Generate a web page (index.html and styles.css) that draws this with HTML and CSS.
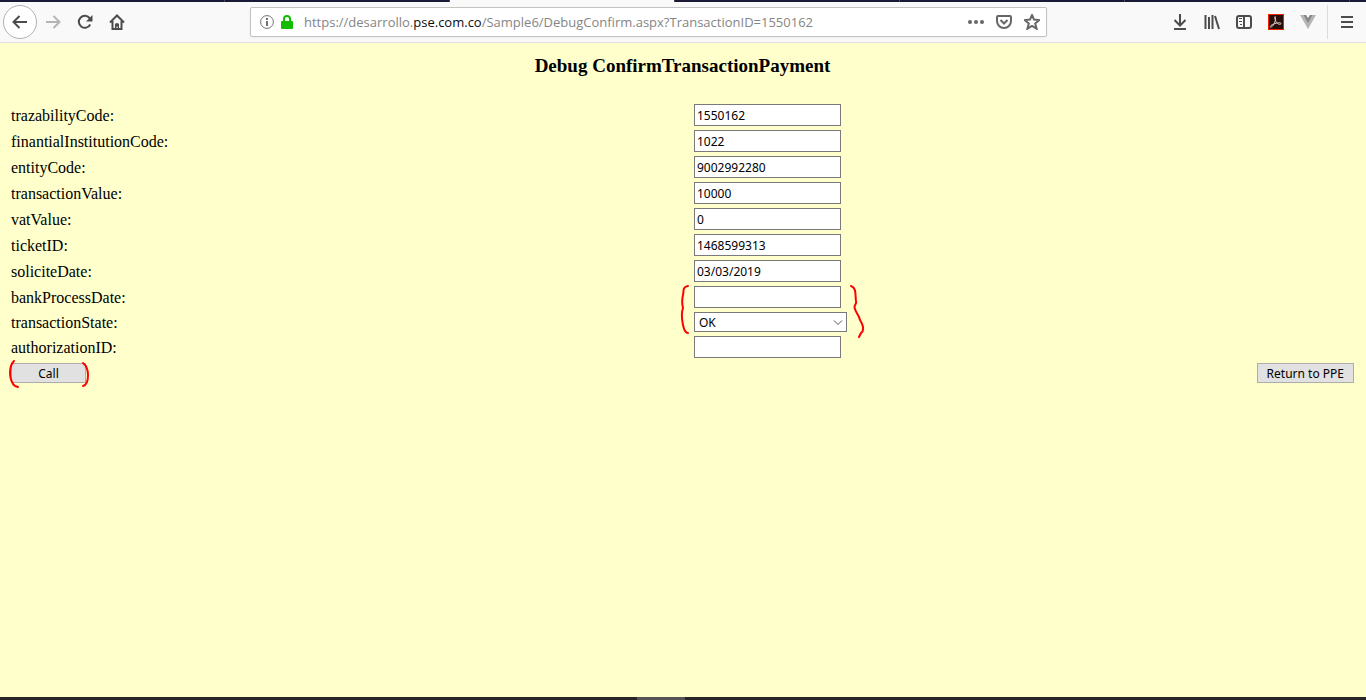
FILE: index.html
```html
<!DOCTYPE html>
<html lang="en">
<head>
<meta charset="utf-8">
<title>Debug ConfirmTransactionPayment</title>
<link rel="stylesheet" href="styles.css">
</head>
<body>
<div class="tabs"><span class="tab"></span><span class="tab"></span><span class="tab active"></span><span class="tab"></span><span class="tab"></span><span class="tab"></span></div>
<header class="toolbar">
  <nav class="nav">
    <button class="icon back" aria-label="Back"><svg width="16" height="16" viewBox="0 0 16 16"><path d="M15 8H2M7.500 2 1.500 8l6 6"/></svg></button>
    <button class="icon faded" aria-label="Forward"><svg width="16" height="16" viewBox="0 0 16 16"><path d="M1 8h13M8.500 2l6 6-6 6"/></svg></button>
    <button class="icon" aria-label="Reload"><svg width="16" height="16" viewBox="0 0 16 16"><path d="M13.200 10.500A6 6 0 1 1 12.500 4L14 5.500"/><path class="solid" d="M15.500 1v6.500H9z"/></svg></button>
    <button class="icon" aria-label="Home"><svg width="16" height="16" viewBox="0 0 16 16"><path d="M1 8.500 8 1.500l7 7M3.500 7v8h9V7"/><path class="solid" d="M6 15v-4.500q0-1.500 2-1.500t2 1.500V15H8.700v-2.500H7.500V15z"/></svg></button>
  </nav>
  <div class="address">
    <svg width="16" height="16" viewBox="0 0 16 16" class="info"><circle cx="8" cy="8" r="6.400"/><path d="M8 7v5M8 4v2"/></svg>
    <svg width="14" height="16" viewBox="0 0 14 16" class="lock"><path class="body" d="M2 7h10q1 0 1 1v6q0 1-1 1H2q-1 0-1-1V8q0-1 1-1z"/><path class="shackle" d="M4 8V5a3 3 0 0 1 6 0v3"/></svg>
    <a class="url" href="#">https://desarrollo.<span class="host">pse.com.co</span>/Sample6/DebugConfirm.aspx?TransactionID=1550162</a>
    <button class="icon small" aria-label="Page actions"><svg width="16" height="16" viewBox="0 0 16 16"><g class="solid"><circle cx="2" cy="8" r="2"/><circle cx="8" cy="8" r="2"/><circle cx="14" cy="8" r="2"/></g></svg></button>
    <button class="icon small" aria-label="Pocket"><svg width="16" height="16" viewBox="0 0 16 16"><path d="M2 2h12q1 0 1 1v4a7 7 0 0 1-14 0V3q0-1 1-1zM4.500 6 8 9.500 11.500 6"/></svg></button>
    <button class="icon small" aria-label="Bookmark"><svg width="16" height="16" viewBox="0 0 16 16"><path d="M8 1l2 4.600 5.200.5-4 3.400 1.400 5.200L8 12l-4.600 2.700 1.400-5.200-4-3.400 5.200-.5z"/></svg></button>
  </div>
  <div class="tools">
    <button class="icon" aria-label="Downloads"><svg width="16" height="16" viewBox="0 0 16 16"><path d="M8 0v11M2.500 6 8 11.500 13.500 6M2 15h12"/></svg></button>
    <button class="icon" aria-label="Library"><svg width="16" height="16" viewBox="0 0 16 16"><path d="M1.500 1v14M5 3v12M8.500 1v14M11 2l4 13"/></svg></button>
    <button class="icon" aria-label="Sidebars"><svg width="16" height="16" viewBox="0 0 16 16"><rect x="1" y="2" width="14" height="12" rx="2"/><path d="M8 2v12"/><path class="thin" d="M3 4.500h3M3 7.500h3M4 10.500h2"/></svg></button>
    <button class="icon" aria-label="Adobe Acrobat"><svg width="16" height="16" viewBox="0 0 16 16"><rect class="pdf" x=".5" y=".5" width="15" height="15"/><path class="mark" d="M3 13C5 13 8 7 7.500 3.500 7 1 6 4 8 7.500 10 11 13 11 13 9.500 13 8 6 9 3 11.500 1.500 13 2.500 13.500 3 13"/></svg></button>
    <button class="icon" aria-label="Vue devtools"><svg width="16" height="16" viewBox="0 0 16 16"><path class="vouter" d="M0 1h6l2 3 2-3h6L8 15z"/><path class="vinner" d="M3.500 1H6l2 3.500L10 1h2.500L8 9z"/></svg></button>
    <button class="icon menu" aria-label="Menu"><svg width="16" height="16" viewBox="0 0 16 16"><path d="M2 3h12M2 8h12M2 13h12"/></svg></button>
  </div>
</header>
<main class="page">
  <h1 class="title">Debug ConfirmTransactionPayment</h1>
  <form class="form">
    <div class="row"><label for="f1">trazabilityCode:</label><input class="field" id="f1" type="text" value="1550162"></div>
    <div class="row"><label for="f2">finantialInstitutionCode:</label><input class="field" id="f2" type="text" value="1022"></div>
    <div class="row"><label for="f3">entityCode:</label><input class="field" id="f3" type="text" value="9002992280"></div>
    <div class="row"><label for="f4">transactionValue:</label><input class="field" id="f4" type="text" value="10000"></div>
    <div class="row"><label for="f5">vatValue:</label><input class="field" id="f5" type="text" value="0"></div>
    <div class="row"><label for="f6">ticketID:</label><input class="field" id="f6" type="text" value="1468599313"></div>
    <div class="row"><label for="f7">soliciteDate:</label><input class="field" id="f7" type="text" value="03/03/2019"></div>
    <div class="row"><label for="f8">bankProcessDate:</label>
      <div class="marked"><input class="field" id="f8" type="text">
        <svg class="brace" width="190" height="60" viewBox="0 0 190 60"><path d="M12 3C6 4 8 8 7 12 6 16 6 21 7 25 5 30 6 37 7 42 8 47 10 50 12 50M175 3C181 5 179 13 180 18 181 22 177 22 179 26 180 30 183 32 184 37 187 42 189 47 185 50L183 54"/></svg>
      </div></div>
    <div class="row"><label for="f9">transactionState:</label><div class="picker"><select class="select" id="f9"><option>OK</option></select><svg class="chevron" width="10" height="6" viewBox="0 0 10 6"><path d="M1 .500 5 4.500 9 .500"/></svg></div></div>
    <div class="row"><label for="f10">authorizationID:</label><input class="field" id="f10" type="text"></div>
    <div class="actions">
      <div class="marked"><button class="btn call" type="button">Call</button>
        <svg class="parens" width="84" height="30" viewBox="0 0 84 30"><path d="M7 2C4 5 3 10 3 14 3 19 5 25 8 27L11 28M76 4C80 7 81 11 81 16 81 21 80 26 76 27"/></svg>
      </div>
      <button class="btn" type="button">Return to PPE</button>
    </div>
  </form>
</main>
<footer class="taskbar"><span class="running"></span></footer>
</body>
</html>
```
FILE: styles.css
```css
* { box-sizing: border-box; }
body {
  margin: 0;
  min-height: 100vh;
  display: flex;
  flex-direction: column;
  background: #ffffcc;
  color: #000;
  font-family: "Liberation Serif", serif;
}
svg { display: block; fill: none; flex: none; }

.tabs { display: flex; height: 2px; background: #1b1a36; }
.tab { flex: 0 0 225px; border-right: 1px solid #45445c; }
.tab.active { background: #f9f9fa; }

.toolbar {
  display: flex;
  align-items: center;
  height: 41px;
  padding: 0 0 0 3px;
  background: #f9f9fa;
  border-bottom: 1px solid #dededf;
}
.nav { display: flex; align-items: center; width: 247px; }
.icon {
  display: flex;
  align-items: center;
  justify-content: center;
  width: 32px;
  height: 32px;
  padding: 0;
  border: 0;
  background: none;
}
.icon svg { stroke: #4c4c4d; stroke-width: 2; }
.icon .solid { fill: #4c4c4d; stroke: none; }
.icon .thin { stroke-width: 1; }
.icon.small { width: 28px; height: 28px; }
.icon.small svg { stroke: #666; }
.icon.small .solid { fill: #666; }
.back {
  width: 34px;
  height: 34px;
  border: 1px solid #b1b1b1;
  border-radius: 50%;
  background: #fff;
}
.faded svg { stroke: #b5b5b6; }

.address {
  display: flex;
  align-items: center;
  flex: 0 1 797px;
  height: 30px;
  padding: 0 0 0 8px;
  background: #fff;
  border: 1px solid #c2c2c3;
  border-radius: 2px;
  box-shadow: 0 1px 3px #0000000d;
}
.info { stroke: #737373; stroke-width: 1; margin-right: 5px; }
.info path { stroke-width: 2; }
.lock .body { fill: #12bc00; }
.lock .shackle { stroke: #12bc00; stroke-width: 2; }
.url {
  flex: 1;
  margin-left: 10px;
  color: #858585;
  font: 13px "Open Sans", sans-serif;
  text-decoration: none;
  white-space: nowrap;
}
.host { color: #0c0c0d; }

.tools { display: flex; align-items: center; margin-left: auto; }
.menu { width: 39px; height: 34px; margin-left: 3px; border-left: 1px solid #dcdcdd; }
.icon .pdf { fill: #2a0e0c; stroke: #f02000; stroke-width: 1; }
.icon .mark { stroke: #d7cdca; stroke-width: 1; }
.icon .vouter { fill: #b5b5b5; stroke: none; }
.icon .vinner { fill: #858585; stroke: none; }

.page { flex: 1; padding: 12px 12px 0 11px; }
.title {
  margin: 0 0 27px;
  font-size: 19px;
  line-height: 22px;
  text-align: center;
}
.form { display: flex; flex-direction: column; gap: 4px; font-size: 16px; }
.row {
  display: grid;
  grid-template-columns: 1fr 1fr;
  column-gap: 23px;
  align-items: center;
  justify-items: start;
}
.row label { padding-top: 2px; line-height: 18px; }
.field, .select, .btn { font: 12px "Noto Sans", sans-serif; color: #000; }
.field {
  display: block;
  width: 147px;
  height: 22px;
  padding: 0 2px;
  border: 1px solid #7a7a7a;
  background: #fff;
}
.select {
  display: block;
  width: 153px;
  height: 20px;
  padding: 0 4px;
  border: 1px solid #7a7a7a;
  border-radius: 0;
  background: #fff;
  appearance: none;
}
.marked, .picker { position: relative; }
.chevron { position: absolute; right: 4px; top: 8px; stroke: #555; pointer-events: none; }
.brace, .parens { position: absolute; stroke: #f00; stroke-width: 2; stroke-linecap: round; pointer-events: none; }
.brace { left: -18px; top: -3px; z-index: 1; }
.parens { left: -4px; top: -4px; }
.actions { display: flex; justify-content: space-between; padding-top: 1px; }
.btn {
  display: block;
  height: 20px;
  padding: 0 9px;
  border: 1px solid #adadad;
  background: #e1e1e1;
}
.call { width: 75px; }

.taskbar { height: 3px; background: #262626; }
.running { display: block; width: 48px; height: 3px; margin-left: 637px; background: #555; }
```
